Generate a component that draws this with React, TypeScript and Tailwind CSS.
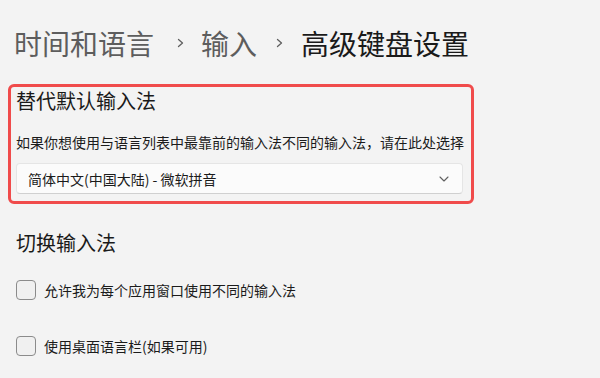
import React from 'react';

const font = { fontFamily: '"Noto Sans CJK SC", "Microsoft YaHei", sans-serif' };

const Crumb = () => (
    <svg width="7" height="10" viewBox="0 0 7 10" className="shrink-0">
        <path d="M1.5 1.5l4 3.5-4 3.5" fill="none" stroke="#5f5f5f" strokeWidth="1.3" strokeLinecap="round" strokeLinejoin="round" />
    </svg>
);

const CheckRow = ({ label, className }: { label: string; className?: string }) => (
    <label className={`flex items-center gap-2 ${className ?? ''}`}>
        <span className="w-5 h-5 rounded-[4px] border border-[#8b8b8b] bg-[#f0f0f0] shrink-0" />
        <span className="text-[14px] leading-5 text-[#1b1b1b]">{label}</span>
    </label>
);

export default function App() {
    return (
        <div className="w-[600px] h-[378px] bg-[#f3f3f3] overflow-hidden" style={font}>
            {/* Breadcrumb */}
            <div className="pt-[29px] pl-[14px] flex items-center text-[28px] leading-[28px] whitespace-nowrap">
                <span className="text-[#5d5d5d]">时间和语言</span>
                <span className="ml-[23px]"><Crumb /></span>
                <span className="ml-[17px] text-[#5d5d5d]">输入</span>
                <span className="ml-[19px]"><Crumb /></span>
                <span className="ml-[18px] text-[#1a1a1a]">高级键盘设置</span>
            </div>

            {/* Highlighted section */}
            <div className="mt-[27px] ml-[8px] w-[466px] border-[3px] border-[#f04b4b] rounded-[6px] pl-[5px] pr-[8px] pt-[4px] pb-[7px]">
                <h2 className="text-[20px] leading-5 text-[#1a1a1a]">替代默认输入法</h2>
                <p className="mt-[21px] text-[14px] leading-5 text-[#1b1b1b] whitespace-nowrap">
                    如果你想使用与语言列表中最靠前的输入法不同的输入法，请在此处选择
                </p>
                <div className="mt-[11px] h-[31px] flex items-center justify-between rounded-[4px] border border-[#e5e5e5] border-b-[#d0d0d0] bg-[#fbfbfb] pl-[11px] pr-[13px]">
                    <span className="text-[14px] leading-5 text-[#1b1b1b]">简体中文(中国大陆) - 微软拼音</span>
                    <svg width="10" height="6" viewBox="0 0 10 6">
                        <path d="M1 1l4 4 4-4" fill="none" stroke="#606060" strokeWidth="1.1" strokeLinecap="round" strokeLinejoin="round" />
                    </svg>
                </div>
            </div>

            {/* Switching input methods */}
            <div className="pl-4">
                <h2 className="mt-[29px] text-[20px] leading-5 text-[#1a1a1a]">切换输入法</h2>
                <CheckRow className="mt-[27px]" label="允许我为每个应用窗口使用不同的输入法" />
                <CheckRow className="mt-[36px]" label="使用桌面语言栏(如果可用)" />
            </div>
        </div>
    );
}
